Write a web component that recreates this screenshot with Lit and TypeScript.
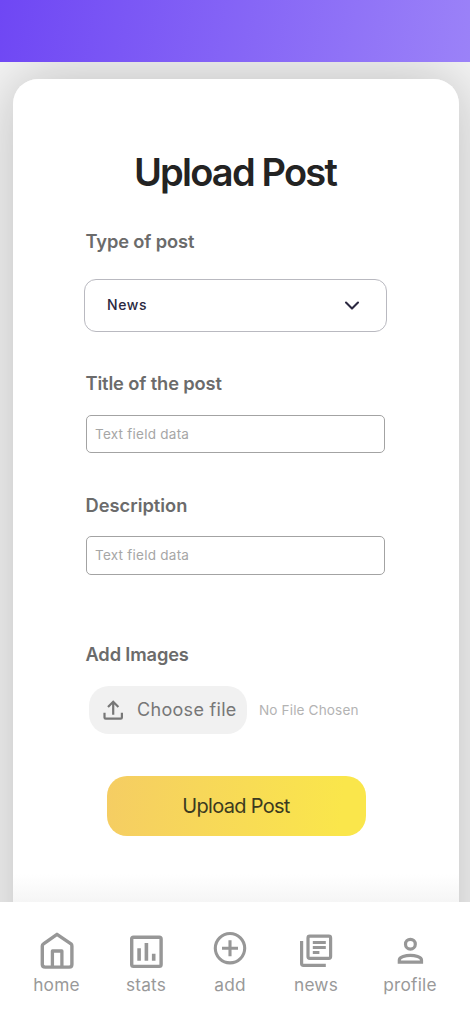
import { LitElement, html, css, svg } from "lit";
import { customElement } from "lit/decorators.js";

const icons = {
  home: svg`<svg viewBox="36.5 930 40 40"><g fill="none" stroke="#979797" stroke-width="3.4" stroke-linejoin="round"><path d="M56.5 934.3 L70.5 943.8 Q71.4 944.6 71.4 946 V964.6 Q71.4 967.1 68.9 967.1 H44.6 Q41.8 967.1 41.8 964.6 V946 Q41.8 944.6 43 943.8 Z"/><path d="M51.9 967 V951 H61.4 V967" stroke-width="3.3"/></g></svg>`,
  stats: svg`<svg viewBox="126 930 40 40"><rect x="131.7" y="937.2" width="29.4" height="29.2" rx="1.8" fill="none" stroke="#979797" stroke-width="3.4"/><path d="M137.3 948.2h3.6v12.6h-3.6zM144.6 943h3.6v17.8h-3.6zM151.9 953.8h3.6v7h-3.6z" fill="#979797"/></svg>`,
  add: svg`<svg viewBox="210 930 40 40"><g fill="none" stroke="#979797" stroke-width="3.1"><circle cx="230" cy="948.2" r="14.7"/><path d="M222 948.2h16M230 940.2v16"/></g></svg>`,
  news: svg`<svg viewBox="296 930 40 40"><g fill="none" stroke="#979797" stroke-width="3.2"><rect x="308" y="936.2" width="22.6" height="22.2" rx="1.8"/><path d="M301.6 941v22.6q0 1.8 1.8 1.8h22.4"/></g><path d="M312.8 941h13v3h-13zM312.8 946h13v3h-13zM312.8 951h6.6v3h-6.6z" fill="#979797"/></svg>`,
  profile: svg`<svg viewBox="390 930 40 40"><g fill="none" stroke="#979797" stroke-width="3.2"><circle cx="410.4" cy="944.2" r="4.9"/><path d="M399.3 962.2v-2.3c0-2.9 6.5-4.6 11.1-4.6s11.1 1.7 11.1 4.6v2.3z"/></g></svg>`,
};

@customElement("app-root")
export class AppRoot extends LitElement {
  static styles = css`
    :host {
      display: flex;
      flex-direction: column;
      height: 1022px;
      overflow: hidden;
      font-family: Inter, "Open Sans", sans-serif;
      background: #f4f4f4;
    }
    * { box-sizing: border-box; }
    svg { display: block; flex: none; }
    .top {
      height: 62px;
      flex: none;
      background: linear-gradient(100deg, #6f47f4 0%, #9b82f8 100%);
    }
    .main {
      height: 840px;
      flex: none;
      padding: 17px 11px 0 13px;
      overflow: hidden;
    }
    .card {
      height: 930px;
      border-radius: 25px 25px 0 0;
      background: linear-gradient(#fff 0 795px, #f5f5f5 824px);
      box-shadow: 0 0 60px rgba(0, 0, 0, 0.23);
      display: flex;
      flex-direction: column;
      padding: 66px 73px 0 72px;
    }
    h1 {
      margin: 0 1px 0 0;
      height: 54px;
      line-height: 54px;
      font-size: 38px;
      font-weight: 600;
      letter-spacing: -1.8px;
      text-align: center;
      white-space: nowrap;
      color: #232323;
    }
    label {
      height: 24px;
      line-height: 24px;
      font-size: 18.3px;
      font-weight: 600;
      letter-spacing: -0.13px;
      color: #6b6b6b;
      padding-left: 0.5px;
      white-space: nowrap;
    }
    .l1 { margin-top: 29.5px; }
    .l2 { margin-top: 39px; }
    .l3 { margin-top: 39.5px; letter-spacing: 0; }
    .l4 { margin-top: 67px; letter-spacing: -0.15px; }
    .select {
      margin: 26px -1px 0;
      height: 53px;
      border: 1.5px solid #b9b9c0;
      border-radius: 12px;
      display: flex;
      align-items: center;
      justify-content: space-between;
      padding: 0 25.5px 0 22px;
      font-size: 14px;
      font-weight: 500;
      letter-spacing: 0.6px;
      color: #2b2840;
    }
    .value { padding-bottom: 2px; }
    .field {
      margin: 20px 1px 0 0.5px;
      height: 38.5px;
      border: 1px solid #a3a3a3;
      border-radius: 5px;
      line-height: 37px;
      padding-left: 8.5px;
      font-size: 13.5px;
      letter-spacing: 0.25px;
      color: #a6a6a6;
    }
    .l3 + .field { margin-top: 19.5px; }
    .row { display: flex; align-items: center; margin-top: 20px; height: 48px; }
    .choose {
      margin-left: 4px;
      width: 158px;
      height: 48px;
      border-radius: 20px;
      background: #f1f1f1;
      display: flex;
      align-items: center;
      padding-left: 14px;
      gap: 14px;
      font-size: 18px;
      letter-spacing: 0.3px;
      color: #777;
      white-space: nowrap;
    }
    .none { margin-left: 12px; font-size: 13.6px; letter-spacing: 0.13px; color: #b3b3b3; white-space: nowrap; }
    .submit {
      margin: 42.5px 20px 0 22px;
      height: 60px;
      border-radius: 20px;
      background: linear-gradient(95deg, #f5cd63, #fae64b 90%);
      display: flex;
      align-items: center;
      justify-content: center;
      font-size: 20px;
      letter-spacing: -0.7px;
      color: #3b3a20;
      padding-right: 1px;
    }
    .nav {
      flex: 1;
      background: #fff;
      display: grid;
      grid-template-columns: 89px 90px 78px 94px 94px;
      padding: 28px 0 0 12px;
    }
    .item { display: flex; flex-direction: column; align-items: center; }
    .cap { margin-top: 5px; height: 20px; line-height: 20px; font-size: 17.3px; letter-spacing: 0.2px; color: #999; }
  `;

  render() {
    return html`
      <header class="top"></header>
      <main class="main">
        <section class="card">
          <h1>Upload Post</h1>
          <label class="l1">Type of post</label>
          <div class="select">
            <span class="value">News</span>
            <svg width="18" height="12" viewBox="0 0 18 12"><path d="M3 3.6 L9 9.6 L15 3.6" fill="none" stroke="#2b2840" stroke-width="2.1" stroke-linecap="round" stroke-linejoin="round"/></svg>
          </div>
          <label class="l2">Title of the post</label>
          <div class="field">Text field data</div>
          <label class="l3">Description</label>
          <div class="field">Text field data</div>
          <label class="l4">Add Images</label>
          <div class="row">
            <div class="choose">
              <svg width="20" height="20" viewBox="0 0 20 20"><g fill="none" stroke="#777" stroke-width="2.2"><path d="M1.5 12.8v4.6q0 1.2 1.2 1.2h15q1.2 0 1.2-1.2v-4.6M10.2 14.8V2M5 7l5.2-5.2L15.4 7"/></g></svg>
              <span>Choose file</span>
            </div>
            <span class="none">No File Chosen</span>
          </div>
          <div class="submit">Upload Post</div>
        </section>
      </main>
      <nav class="nav">
        ${(["home", "stats", "add", "news", "profile"] as const).map(
          (n) => html`<div class="item">
            <svg width="40" height="40">${icons[n]}</svg>
            <span class="cap">${n}</span>
          </div>`
        )}
      </nav>
    `;
  }
}
